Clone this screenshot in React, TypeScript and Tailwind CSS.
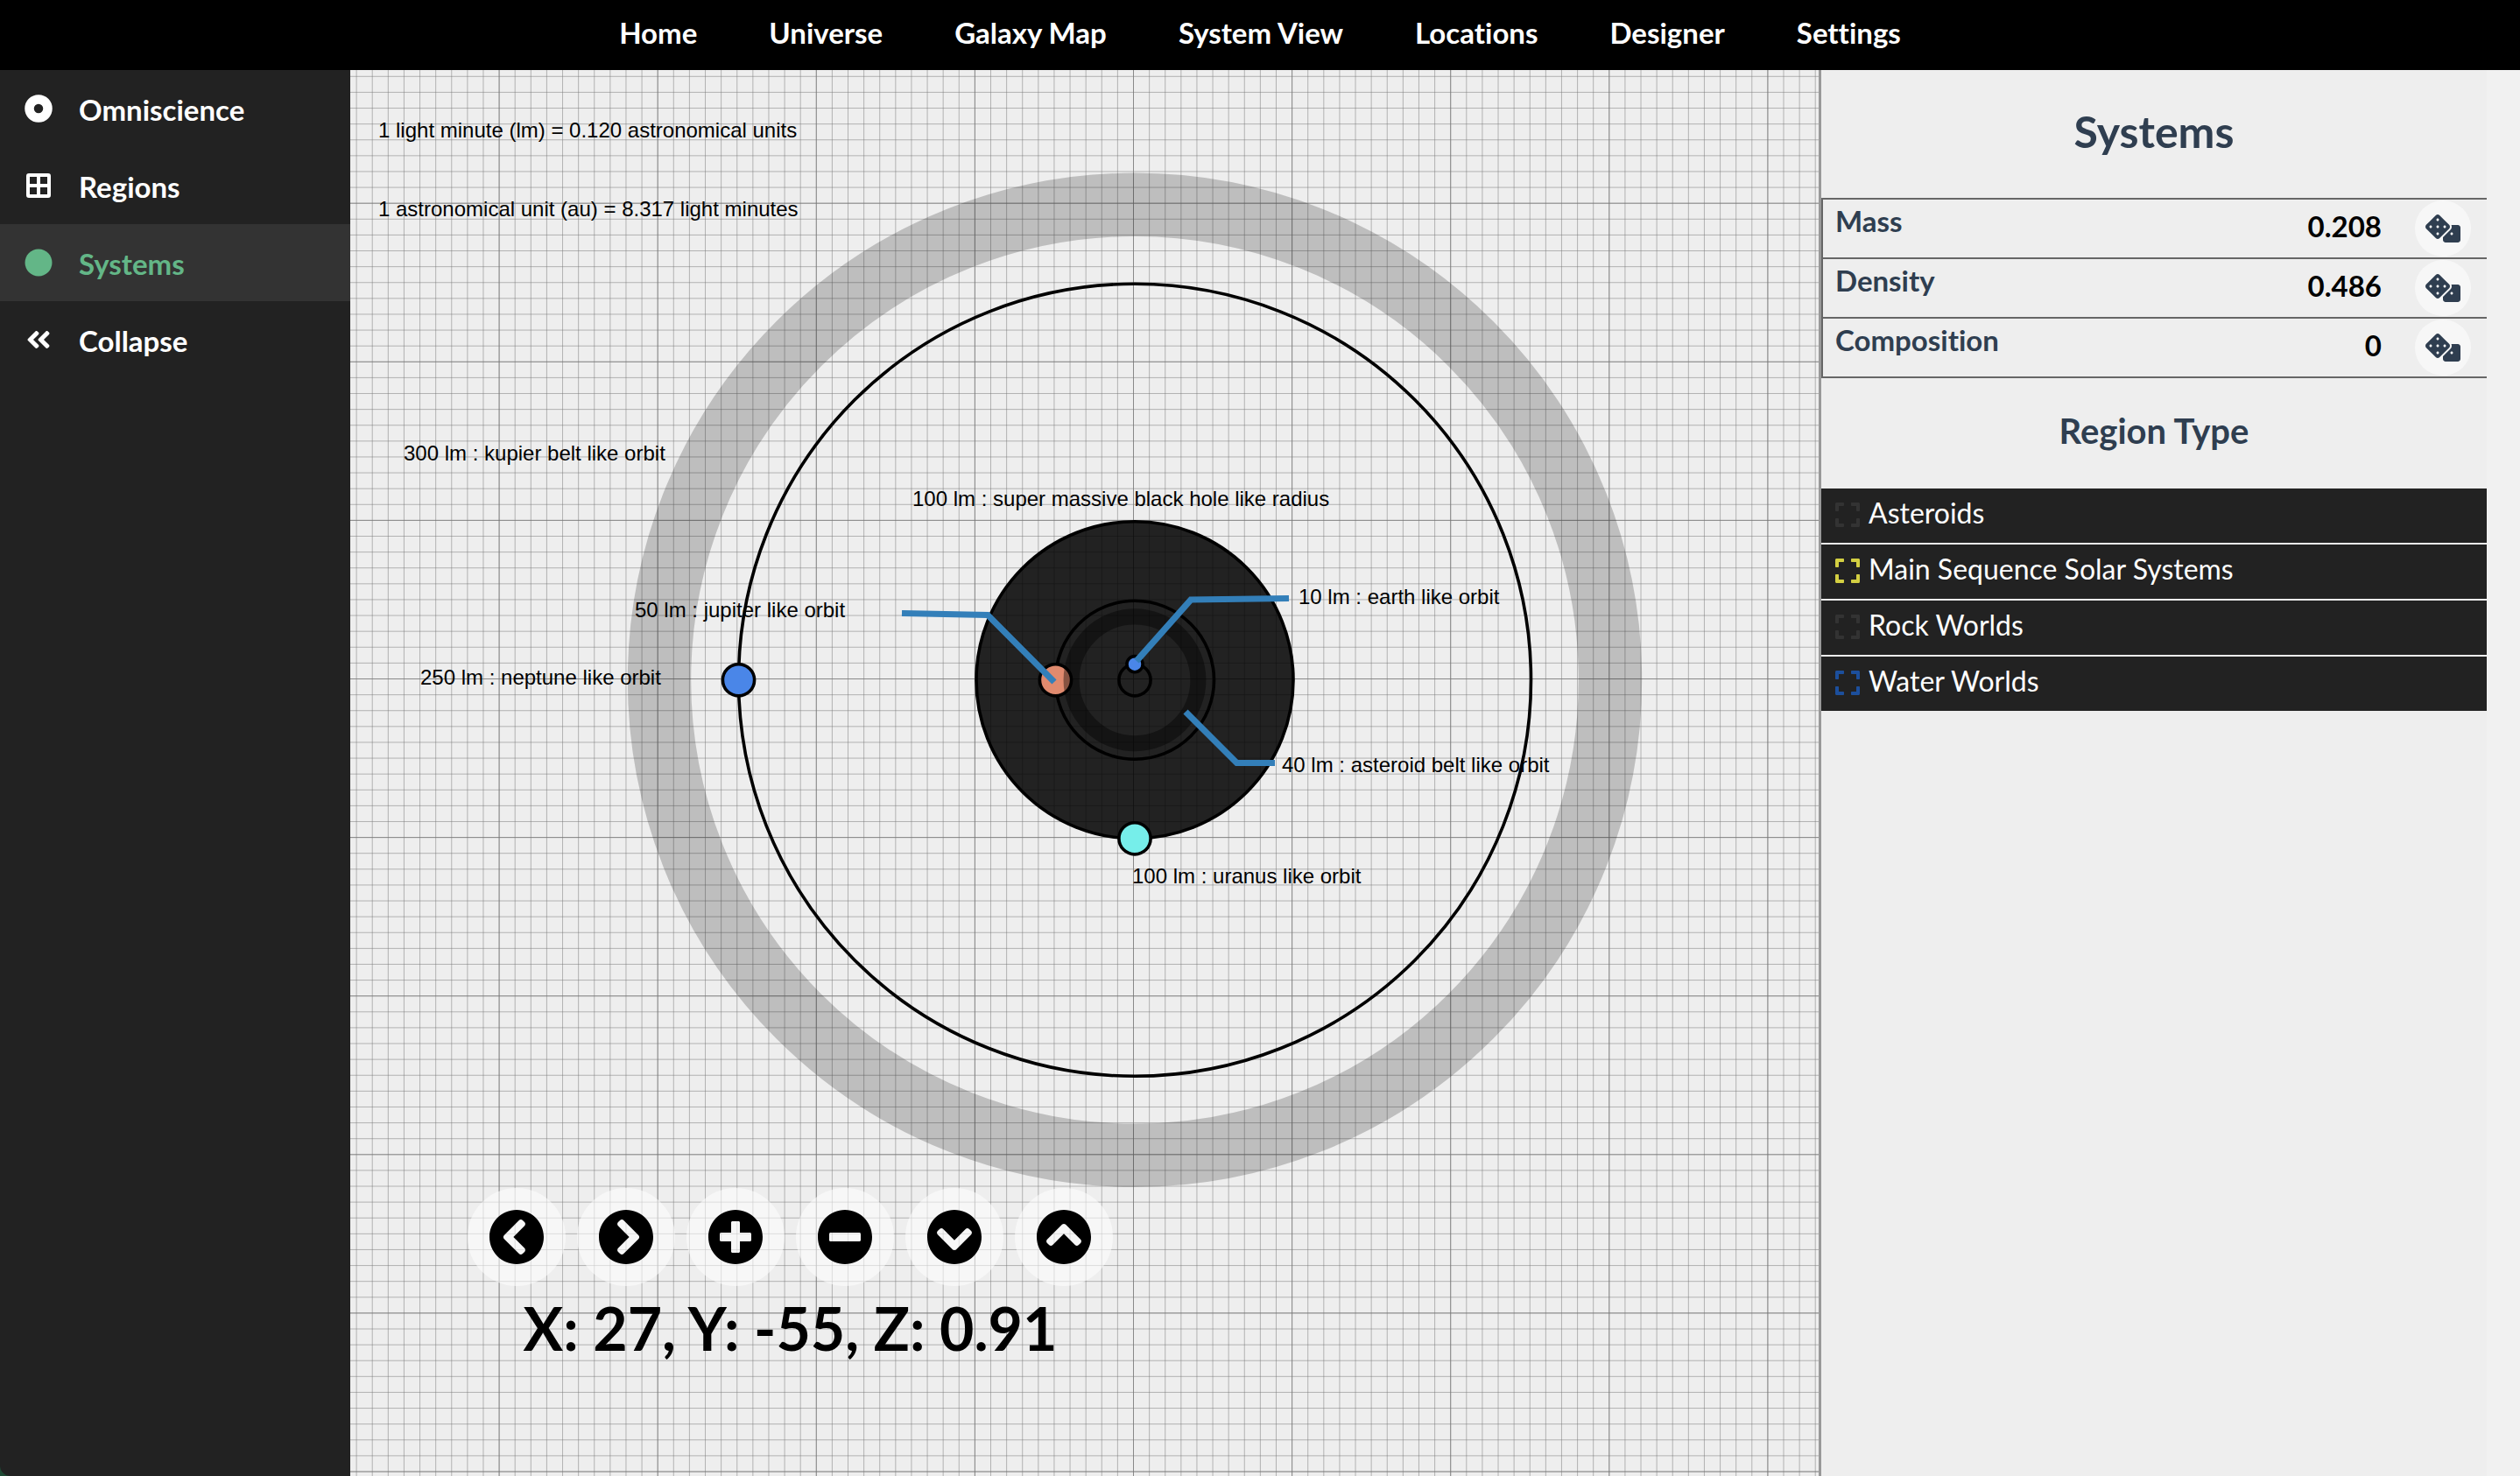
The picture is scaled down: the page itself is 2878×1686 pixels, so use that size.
import React from "react";
import {
  FaAngleDoubleLeft,
  FaChevronCircleDown,
  FaChevronCircleLeft,
  FaChevronCircleRight,
  FaChevronCircleUp,
  FaCircle,
  FaDice,
  FaExpand,
  FaMinusCircle,
  FaPlusCircle,
} from "react-icons/fa";

const navItems = ["Home", "Universe", "Galaxy Map", "System View", "Locations", "Designer", "Settings"];

function DiscIcon() {
  return (
    <svg viewBox="0 0 32 32" className="size-8" fill="none" stroke="currentColor" aria-hidden="true">
      <circle cx="16" cy="16" r="10.5" strokeWidth="10.5" />
    </svg>
  );
}

function GridIcon() {
  return (
    <svg viewBox="0 0 32 32" className="size-8" fill="none" stroke="currentColor" strokeWidth="4" aria-hidden="true">
      <rect x="4" y="4" width="24" height="24" rx="1" />
      <path d="M16 4V28M4 16H28" />
    </svg>
  );
}

const sideItems = [
  { label: "Omniscience", icon: <DiscIcon />, active: false },
  { label: "Regions", icon: <GridIcon />, active: false },
  { label: "Systems", icon: <FaCircle className="size-8" />, active: true },
  { label: "Collapse", icon: <FaAngleDoubleLeft className="size-8" />, active: false },
];

const STEP = 18.11;
const UNIT = 1.81;
const CENTER = { x: 896, y: 696.8 };
const GRID = { x: 894.5, y: 695.5 };

const gridSteps = Array.from({ length: 221 }, (_, i) => i - 110);

function gridPath(major: boolean) {
  return gridSteps
    .filter((n) => !major || n % 10 === 0)
    .map((n) => `M${GRID.x + n * STEP} -1500V3500M-1500 ${GRID.y + n * STEP}H3500`)
    .join("");
}

const mapLabels = [
  { x: 32, y: 77, text: "1 light minute (lm) = 0.120 astronomical units" },
  { x: 32, y: 167, text: "1 astronomical unit (au) = 8.317 light minutes" },
  { x: 61, y: 446, text: "300 lm : kupier belt like orbit" },
  { x: 642, y: 498, text: "100 lm : super massive black hole like radius" },
  { x: 325, y: 625, text: "50 lm : jupiter like orbit" },
  { x: 80, y: 702, text: "250 lm : neptune like orbit" },
  { x: 1083, y: 610, text: "10 lm : earth like orbit" },
  { x: 1064, y: 802, text: "40 lm : asteroid belt like orbit" },
  { x: 893, y: 929, text: "100 lm : uranus like orbit" },
];

function SystemMap() {
  return (
    <svg className="absolute inset-0 h-full w-full" role="img" aria-label="System orbits">
      <path d={gridPath(false)} stroke="#777" strokeOpacity="0.5" strokeWidth="1" fill="none" />
      <path d={gridPath(true)} stroke="#777" strokeOpacity="0.7" strokeWidth="1" fill="none" />
      <g transform={`translate(${CENTER.x} ${CENTER.y})`} fill="none" stroke="#000" strokeWidth="3.6">
        <circle r={300 * UNIT} strokeWidth={40 * UNIT} strokeOpacity="0.2" />
        <circle r={250 * UNIT} />
        <circle r={100 * UNIT} fill="#000" fillOpacity="0.857" />
        <circle r={50 * UNIT} />
        <circle r={10 * UNIT} />
        <circle cx={-250 * UNIT} r={10 * UNIT} fill="#4a86e8" />
        <circle cy={100 * UNIT} r={10 * UNIT} fill="#76eeea" />
        <circle cx={-50 * UNIT} r={10 * UNIT} fill="#e08a6e" />
        <circle cy={-10 * UNIT} r={5 * UNIT} fill="#4a86e8" />
        <circle r={40 * UNIT} strokeWidth={10 * UNIT} strokeOpacity="0.4" />
      </g>
      <g fill="none" stroke="#337fb9" strokeWidth="7.2">
        <path d="M630 620.5L728 622.5L804 699" />
        <path d="M898 675L960 605L1072 603.5" />
        <path d="M954 733L1012.500 791.500H1056" />
      </g>
      <g className="font-['Liberation_Sans',sans-serif] text-[24px]" fill="#000">
        {mapLabels.map((l) => (
          <text key={l.text} x={l.x} y={l.y}>
            {l.text}
          </text>
        ))}
      </g>
    </svg>
  );
}

const controls = [
  { label: "Pan left", Icon: FaChevronCircleLeft },
  { label: "Pan right", Icon: FaChevronCircleRight },
  { label: "Zoom in", Icon: FaPlusCircle },
  { label: "Zoom out", Icon: FaMinusCircle },
  { label: "Pan down", Icon: FaChevronCircleDown },
  { label: "Pan up", Icon: FaChevronCircleUp },
];

const properties = [
  { label: "Mass", value: "0.208" },
  { label: "Density", value: "0.486" },
  { label: "Composition", value: "0" },
];

const regionTypes = [
  { label: "Asteroids", color: "text-[#333333]" },
  { label: "Main Sequence Solar Systems", color: "text-[#d3cf42]" },
  { label: "Rock Worlds", color: "text-[#333333]" },
  { label: "Water Worlds", color: "text-[#1c4f9c]" },
];

export default function App() {
  return (
    <div className="flex min-h-screen flex-col bg-[#1f4a35] font-['Lato',sans-serif] text-[33px] leading-10 [font-variant-ligatures:none]">
      <nav className="flex h-20 justify-center gap-[82px] bg-black pb-1.5 font-bold text-white">
        {navItems.map((item) => (
          <a key={item} href="#" className="flex items-center">
            {item}
          </a>
        ))}
      </nav>
      <div className="flex flex-1">
        <aside className="w-[400px] shrink-0 rounded-bl-xl bg-[#222222] font-bold text-white">
          {sideItems.map((item) => (
            <a
              key={item.label}
              href="#"
              className={
                item.active
                  ? "flex h-22 items-center gap-[30px] bg-[#333333] pl-7 text-[#63b687]"
                  : "flex h-22 items-center gap-[30px] pl-7"
              }
            >
              {item.icon}
              <span className="pt-0.5">{item.label}</span>
            </a>
          ))}
        </aside>
        <main className="relative flex min-w-0 flex-1 flex-col justify-end overflow-hidden bg-[#eeeeee]">
          <SystemMap />
          <div className="relative ml-[134px] flex w-[737px] flex-col items-center pb-[125px]">
            <div className="flex gap-[13px]">
              {controls.map(({ label, Icon }) => (
                <button
                  key={label}
                  type="button"
                  aria-label={label}
                  className="flex size-28 items-center justify-center rounded-full bg-white/55 text-black"
                >
                  <Icon className="size-16" />
                </button>
              ))}
            </div>
            <p className="pt-1 text-[68px] leading-[88px] font-bold text-black">X: 27, Y: -55, Z: 0.91</p>
          </div>
        </main>
        <section className="w-[801px] shrink-0 border-l-3 border-[#999999] bg-[#f1f1f1] pr-[38px] text-[#2f3e50]">
          <div className="h-full bg-[#eeeeee]">
            <h2 className="pt-10 pb-[46px] text-center text-[50px] leading-[60px] font-bold">Systems</h2>
            <div className="border-t-2 border-l-2 border-[#666666] font-bold">
              {properties.map((p) => (
                <div key={p.label} className="flex h-[68px] border-b-2 border-[#666666] pr-[18px] pl-3.5">
                  <span className="flex-1 pt-1">{p.label}</span>
                  <output className="pt-2.5 pr-[38px] text-black">{p.value}</output>
                  <button
                    type="button"
                    aria-label={`Randomize ${p.label}`}
                    className="flex size-16 items-center justify-center self-center rounded-full bg-white/55"
                  >
                    <FaDice className="h-8 w-10" />
                  </button>
                </div>
              ))}
            </div>
            <h3 className="pt-9 pb-[42px] text-center text-[40px] leading-12 font-bold">Region Type</h3>
            <ul className="flex flex-col gap-0.5 text-[32px]">
              {regionTypes.map((r) => (
                <li key={r.label} className="flex h-[62px] gap-2.5 bg-[#222222] pt-2 pl-4 text-white">
                  <FaExpand className={`mt-1.5 h-8 w-7 ${r.color}`} />
                  <span>{r.label}</span>
                </li>
              ))}
            </ul>
          </div>
        </section>
      </div>
    </div>
  );
}
